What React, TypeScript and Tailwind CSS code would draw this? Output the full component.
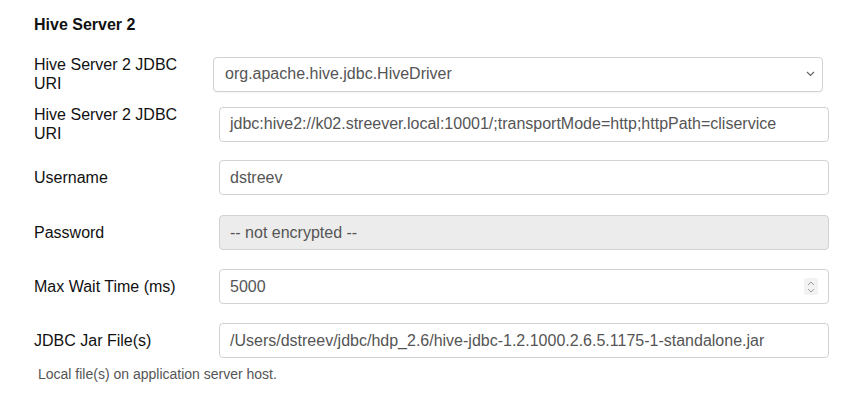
import React from "react";

const font = { fontFamily: '"Liberation Sans", Arial, Helvetica, sans-serif' };

function Label({ children }: { children: React.ReactNode }) {
  return (
    <div className="w-[185px] shrink-0 pr-[30px] text-[16px] leading-[19px] text-[#111]">
      {children}
    </div>
  );
}

function TextBox({ value, disabled }: { value: string; disabled?: boolean }) {
  return (
    <div
      className={`flex h-[35px] w-[610px] items-center rounded-[4px] border border-[#d2d2d2] px-[10px] text-[16px] text-[#555] ${
        disabled ? "bg-[#ececec]" : "bg-white"
      }`}
    >
      {value}
    </div>
  );
}

export default function App() {
  return (
    <div className="min-h-[396px] w-[851px] bg-white pl-[34px]" style={font}>
      <div className="pt-[16px] text-[16px] font-bold leading-[18px] text-[#111]">Hive Server 2</div>

      {/* Row 1: select */}
      <div className="mt-[21px] flex items-center">
        <div className="w-[179px] shrink-0 pr-[30px] text-[16px] leading-[19px] text-[#111]">
          Hive Server 2 JDBC URI
        </div>
        <div className="flex h-[35px] w-[610px] items-center justify-between rounded-[4px] border border-[#d2d2d2] bg-white pl-[11px] pr-[6px] text-[16px] text-[#555] shadow-[0_1px_1px_rgba(0,0,0,0.04)]">
          <span>org.apache.hive.jdbc.HiveDriver</span>
          <svg width="9" height="6" viewBox="0 0 9 6" className="mr-[1px]">
            <path d="M1 1 L4.5 4.5 L8 1" fill="none" stroke="#666" strokeWidth="1.2" />
          </svg>
        </div>
      </div>

      {/* Row 2 */}
      <div className="mt-[12px] flex items-center">
        <Label>Hive Server 2 JDBC URI</Label>
        <TextBox value="jdbc:hive2://k02.streever.local:10001/;transportMode=http;httpPath=cliservice" />
      </div>

      {/* Row 3 */}
      <div className="mt-[17px] flex items-center">
        <Label>Username</Label>
        <TextBox value="dstreev" />
      </div>

      {/* Row 4 */}
      <div className="mt-[20px] flex items-center">
        <Label>Password</Label>
        <TextBox value="-- not encrypted --" disabled />
      </div>

      {/* Row 5 */}
      <div className="mt-[19px] flex items-center">
        <Label>Max Wait Time (ms)</Label>
        <div className="flex h-[35px] w-[610px] items-center justify-between rounded-[4px] border border-[#d2d2d2] bg-white pl-[10px] pr-[10px] text-[16px] text-[#555]">
          <span>5000</span>
          <div className="flex h-[17px] w-[14px] flex-col items-center justify-center gap-[2px] rounded-[2px] bg-[#f2f2f2]">
            <svg width="8" height="5" viewBox="0 0 8 5">
              <path d="M1 4 L4 1 L7 4" fill="none" stroke="#9a9a9a" strokeWidth="1" />
            </svg>
            <svg width="8" height="5" viewBox="0 0 8 5">
              <path d="M1 1 L4 4 L7 1" fill="none" stroke="#9a9a9a" strokeWidth="1" />
            </svg>
          </div>
        </div>
      </div>

      {/* Row 6 */}
      <div className="mt-[19px] flex items-center">
        <Label>JDBC Jar File(s)</Label>
        <TextBox value="/Users/dstreev/jdbc/hdp_2.6/hive-jdbc-1.2.1000.2.6.5.1175-1-standalone.jar" />
      </div>

      <div className="mt-[7px] pl-[4px] text-[14px] leading-[18px] text-[#555]">
        Local file(s) on application server host.
      </div>
    </div>
  );
}
